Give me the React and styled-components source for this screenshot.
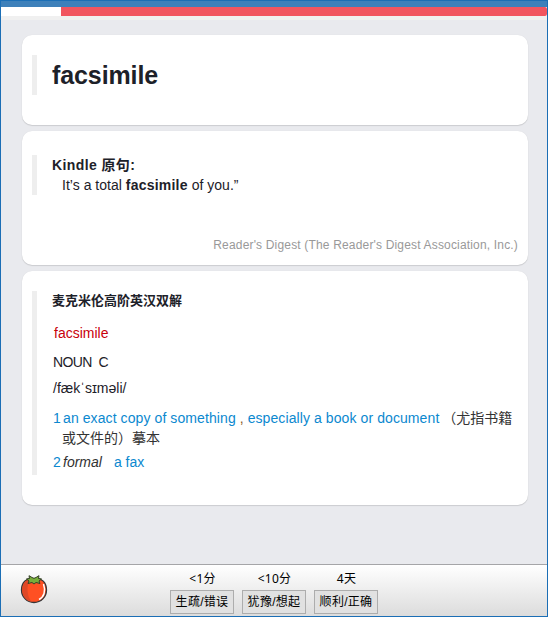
import React from "react";
import styled, { createGlobalStyle } from "styled-components";

const GlobalStyle = createGlobalStyle`
  * { box-sizing: border-box; }
  body { margin: 0; overflow: hidden; }
`;

const Window = styled.div`
  width: 548px;
  height: 617px;
  display: flex;
  flex-direction: column;
  border: 1px solid #1b6eb5;
  background: #e9eaee;
  font-family: "Liberation Sans", "Noto Sans CJK SC", sans-serif;
  font-size: 14px;
  line-height: 20px;
  color: #1d2129;
  white-space: nowrap;
`;

const TitleStrip = styled.div`
  flex: none;
  height: 6px;
  background: #3d80ba;
`;

const ProgressTrack = styled.div`
  flex: none;
  height: 9px;
  background: #fff;
  display: flex;
  justify-content: flex-end;
`;

const ProgressFill = styled.div`
  width: 486px;
  background: #f1555f;
  border-radius: 0 2px 2px 0;
`;

const Divider = styled.div`
  flex: none;
  height: 4px;
  background: #f0f0f0;
`;

const Deck = styled.main`
  flex: 1;
  display: flex;
  flex-direction: column;
  gap: 6px;
  padding: 15px 19px 0 21px;
`;

const Card = styled.section`
  height: ${(p) => p.$height}px;
  flex: none;
  display: flex;
  flex-direction: column;
  justify-content: space-between;
  background: #fff;
  border-radius: 10px;
  padding: ${(p) => p.$top || 20}px 10px 10px;
  box-shadow: 0 1px 1px rgba(0, 0, 0, 0.12), 0 0 1px rgba(0, 0, 0, 0.1);
`;

const Quote = styled.div`
  border-left: 5px solid #eee;
  padding-left: 15px;
  height: ${(p) => p.$height}px;
`;

const Headword = styled.h1`
  margin: 0;
  font-size: 25px;
  line-height: 40px;
  letter-spacing: -0.1px;
`;

const Heading = styled.div`
  font-weight: bold;
  font-size: ${(p) => p.$size || 14}px;
  letter-spacing: ${(p) => p.$spacing || 0}px;
`;

const Sentence = styled.div`
  padding-left: 10px;
  letter-spacing: 0.02px;

  b {
    letter-spacing: 0.22px;
  }
`;

const Source = styled.div`
  align-self: flex-end;
  font-size: 12px;
  color: #999;
  letter-spacing: 0.17px;
`;

const Entry = styled.div`
  margin: ${(p) => p.$top}px 0 0 ${(p) => p.$left || 1}px;
  color: ${(p) => p.$color || "#1d2129"};
  letter-spacing: ${(p) => p.$spacing || 0}px;
  white-space: pre;
`;

const Sense = styled.div`
  display: grid;
  grid-template-columns: 10px 1fr;
  margin: ${(p) => p.$top}px 0 0 1px;
  color: #333;
`;

const English = styled.span`
  color: #0b88cf;
  letter-spacing: ${(p) => p.$spacing || 0}px;
`;

const Comma = styled.span`
  color: #8b5a2b;
`;

const Label = styled.em`
  margin-right: 12px;
`;

const Translation = styled.span`
  margin-left: ${(p) => p.$offset}px;
`;

const Footer = styled.footer`
  flex: none;
  height: 52px;
  border-top: 1px solid #a5a5a8;
  background: linear-gradient(#fff, #dcdcdc);
  display: grid;
  grid-template-columns: 169px auto 1fr;
  color: #000;
`;

const IconSlot = styled.div`
  padding: 10px 0 0 19px;
`;

const Answers = styled.div`
  display: flex;
  gap: 8px;
  padding-top: 4px;
`;

const Answer = styled.div`
  width: 64px;
  display: flex;
  flex-direction: column;
  align-items: center;
`;

const Interval = styled.div`
  font-family: "Noto Sans", "Noto Sans CJK SC", sans-serif;
  font-size: 12px;
  line-height: 18px;
  padding: 1px 0 0 1px;
  height: 21px;
  letter-spacing: 0.2px;
`;

const AnswerButton = styled.button`
  width: 64px;
  height: 24px;
  padding: 1px 0 0;
  border: 1px solid #adadad;
  background: #e1e1e1;
  color: #000;
  font-family: "Liberation Sans", "Noto Sans CJK SC", sans-serif;
  font-size: 12px;
  line-height: 21px;
  letter-spacing: 0.3px;
`;

const Tomato = () => (
  <svg width="30" height="31" viewBox="0 0 30 31" display="block">
    <path d="M14 4C6 2 1.500 8 1.500 15C1.500 22 7 27.500 14 27.500S26.500 22 26.500 15C26.500 8 22 2 14 4Z" fill="#ff5023" stroke="#353638" strokeWidth="1.300" />
    <path d="M10 5C5 5 2.200 9 2.200 15C2.200 21 6 26 11.500 26.700C7 22 6 10 10 5Z" fill="#df4827" />
    <path d="M23.500 9C26 16 24 22 19 24.500" fill="none" stroke="#fff" strokeWidth="1.500" />
    <path d="M9 0.700L12 2.500L14 3.300L16 2.500L19 0.700L18.500 3.500L21.500 4L19 6L20 8.500L16 7.500L14 9L12 7.500L8 8.500L9 6L6.500 4L9.500 3.500Z" fill="#78ad3a" stroke="#354128" strokeWidth="1" />
  </svg>
);

const answers = [
  ["<1分", "生疏/错误"],
  ["<10分", "犹豫/想起"],
  ["4天", "顺利/正确"],
];

export default function App() {
  return (
    <Window>
      <GlobalStyle />
      <TitleStrip />
      <ProgressTrack>
        <ProgressFill />
      </ProgressTrack>
      <Divider />
      <Deck>
        <Card $height={90}>
          <Quote $height={40}>
            <Headword>facsimile</Headword>
          </Quote>
        </Card>
        <Card $height={134} $top={24}>
          <Quote $height={40}>
            <Heading $spacing={0.4}>Kindle 原句:</Heading>
            <Sentence>
              It’s a total <b>facsimile</b> of you.”
            </Sentence>
          </Quote>
          <Source>Reader's Digest (The Reader's Digest Association, Inc.)</Source>
        </Card>
        <Card $height={234}>
          <Quote $height={184}>
            <Heading $size={13}>麦克米伦高阶英汉双解</Heading>
            <Entry $top={12} $left={2} $color="#c8000b">facsimile</Entry>
            <Entry $top={9} $spacing={-0.6}>{"NOUN  C"}</Entry>
            <Entry $top={6}>/fækˈsɪməli/</Entry>
            <Sense $top={10}>
              <English>1</English>
              <div>
                <English $spacing={0.09}>an exact copy of something </English>
                <Comma>,</Comma>
                <English $spacing={0.09}> especially a book or document</English>
                <Translation $offset={3}>（尤指书籍</Translation>
                <br />
                <Translation $offset={-1}>或文件的）摹本</Translation>
              </div>
            </Sense>
            <Sense $top={4}>
              <English>2</English>
              <div>
                <Label>formal</Label>
                <English>a fax</English>
              </div>
            </Sense>
          </Quote>
        </Card>
      </Deck>
      <Footer>
        <IconSlot>
          <Tomato />
        </IconSlot>
        <Answers>
          {answers.map(([interval, label]) => (
            <Answer key={label}>
              <Interval>{interval}</Interval>
              <AnswerButton>{label}</AnswerButton>
            </Answer>
          ))}
        </Answers>
      </Footer>
    </Window>
  );
}
